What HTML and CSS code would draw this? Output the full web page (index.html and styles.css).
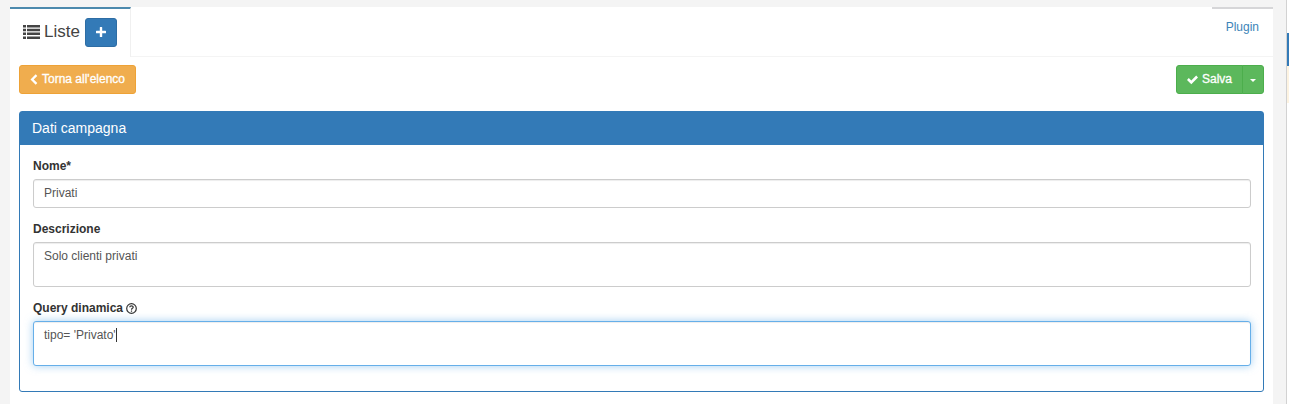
FILE: index.html
```html
<!DOCTYPE html>
<html lang="it">
<head>
<meta charset="utf-8">
<title>Liste</title>
<link rel="stylesheet" href="styles.css">
</head>
<body>
<div class="page">
  <main class="content">
    <header class="tabs">
      <div class="tab tab-active">
        <svg class="icon-list" viewBox="0 0 17 14" aria-hidden="true"><path d="M0 0h3v2.500H0zM4 0h13v2.500H4zM0 3.800h3v2.500H0zM4 3.800h13v2.500H4zM0 7.600h3v2.500H0zM4 7.600h13v2.500H4zM0 11.400h3v2.500H0zM4 11.400h13v2.500H4z"/></svg>
        <h1 class="title">Liste</h1>
        <button class="btn btn-primary" type="button" aria-label="Aggiungi"><svg class="icon-plus" viewBox="0 0 10 10" aria-hidden="true"><path d="M4.300 0h1.400q.5 0 .5.5v3.300h3.300q.5 0 .5.5v1.400q0 .5-.5.5H6.200v3.300q0 .5-.5.5H4.300q-.5 0-.5-.5V6.200H.5Q0 6.200 0 5.700V4.300Q0 3.800.5 3.800h3.300V.5Q3.800 0 4.300 0z"/></svg></button>
      </div>
      <a class="tab tab-plugin" href="#plugin">Plugin</a>
    </header>
    <div class="body">
      <div class="toolbar">
        <button class="btn btn-warning" type="button"><svg class="icon-left" viewBox="0 0 8 11" aria-hidden="true"><path d="M5.700.3 7.300 1.900 3.700 5.500 7.300 9.100 5.700 10.700.5 5.500z"/></svg>Torna all'elenco</button>
        <div class="group">
          <button class="btn btn-success btn-save" type="button"><svg class="icon-check" viewBox="0 0 11 10" aria-hidden="true"><path d="M9.200.6 11 2.400 4.300 9.200 0 4.900 1.800 3.100 4.300 5.600z"/></svg>Salva</button>
          <button class="btn btn-success btn-more" type="button" aria-label="Altre azioni"><span class="arrow"></span></button>
        </div>
      </div>
      <section class="panel">
        <h2 class="panel-title">Dati campagna</h2>
        <form class="form">
          <div class="field">
            <label for="nome">Nome*</label>
            <input class="control" id="nome" type="text" value="Privati">
          </div>
          <div class="field">
            <label for="descrizione">Descrizione</label>
            <textarea class="control area" id="descrizione">Solo clienti privati</textarea>
          </div>
          <div class="field">
            <label for="query">Query dinamica <svg class="icon-help" viewBox="0 0 11 11" aria-hidden="true"><circle cx="5.500" cy="5.500" r="4.800"/><path d="M3.700 4.300C3.800 2.400 7.300 2.400 7.200 4.300 7.200 5.400 5.500 5.300 5.500 6.700M5.500 7.500v1.200"/></svg></label>
            <div class="editor">
              <textarea class="control area control-active" id="query">tipo= 'Privato'</textarea>
              <span class="cursor" aria-hidden="true"></span>
            </div>
          </div>
        </form>
      </section>
    </div>
  </main>
  <aside class="rail">
    <div class="rail-blue"></div>
    <div class="rail-cream"></div>
  </aside>
</div>
</body>
</html>
```
FILE: styles.css
```css
* { box-sizing: border-box; }
body {
  margin: 0;
  background: #f4f4f4;
  color: #333;
  font: 12px/17px "Liberation Sans", Arial, sans-serif;
}
.page { display: flex; min-height: 100vh; }
.content { flex: 1; margin: 7px 13px 0 10px; background: #fff; }
.rail { width: 3px; padding-top: 33px; background: #fff; border-left: 1px solid #d2d2d2; }
.rail-blue { height: 33px; background: #337ab7; }
.rail-cream { height: 37px; background: #fdf3e1; }

.tabs {
  display: flex;
  justify-content: space-between;
  align-items: flex-start;
  height: 50px;
  border-bottom: 1px solid #f4f4f4;
}
.tab-active {
  display: flex;
  align-items: center;
  height: 50px;
  padding: 0 13px 2px;
  background: #fff;
  border-top: 2px solid #4c89ad;
  border-right: 1px solid #f0f0f0;
}
.title { margin: 0 5px 0 4px; font-size: 17px; line-height: 20px; font-weight: 400; color: #444; }
.tab-plugin {
  padding: 10px 14px;
  border-top: 2px solid #d6d6d8;
  color: #3c84b8;
  text-decoration: none;
}

.btn {
  display: inline-flex;
  align-items: center;
  justify-content: center;
  height: 29px;
  padding: 0 10px;
  border: 1px solid;
  border-radius: 3px;
  color: #fff;
  font: inherit;
  -webkit-text-stroke: 0.3px;
}
.btn svg { fill: #fff; }
.btn-primary { width: 32px; background: #337ab7; border-color: #2e6da4; }
.btn-warning { background: #f0ad4e; border-color: #eea236; }
.btn-success { background: #5cb85c; border-color: #4cae4c; }
.btn-save { border-radius: 3px 0 0 3px; }
.btn-more { width: 22px; margin-left: -1px; padding: 2px 0 0; border-radius: 0 3px 3px 0; }
.group { display: flex; }
.arrow { border: 3px solid transparent; border-top-color: #fff; border-bottom: 0; }

.icon-list { width: 17px; height: 14px; fill: #444; }
.icon-plus { width: 10px; height: 10px; margin-bottom: 1px; }
.icon-left { width: 8px; height: 11px; margin-right: 4px; }
.icon-check { width: 11px; height: 10px; margin-right: 4px; }
.icon-help { width: 11px; height: 11px; fill: none; stroke: #333; stroke-width: 1.200; vertical-align: -2px; }

.body { padding: 8px 9px 12px; }
.toolbar { display: flex; justify-content: space-between; margin-bottom: 17px; }
.panel { border: 1px solid #337ab7; border-radius: 3px; }
.panel-title {
  margin: 0;
  padding: 8px 12px;
  background: #337ab7;
  color: #fff;
  font-size: 14px;
  line-height: 17px;
  font-weight: 400;
}
.form { padding: 13px 12px 12px 13px; }
.field { margin-bottom: 13px; }
label { display: block; margin-bottom: 4px; font-weight: 700; }
.control {
  display: block;
  width: 100%;
  height: 29px;
  padding: 5px 10px 6px;
  background: #fff;
  border: 1px solid #ccc;
  border-radius: 3px;
  outline: 0;
  color: #555;
  font: inherit;
  resize: none;
  box-shadow: inset 0 1px 1px rgba(0, 0, 0, 0.075);
}
.area { height: 45px; }
.control-active {
  border-color: #66afe9;
  box-shadow: inset 0 1px 1px rgba(0, 0, 0, 0.075), 0 0 8px rgba(102, 175, 233, 0.6);
}
.editor { position: relative; }
.cursor {
  position: absolute;
  top: 7px;
  left: 83px;
  width: 1px;
  height: 14px;
  background: #333;
}
```
